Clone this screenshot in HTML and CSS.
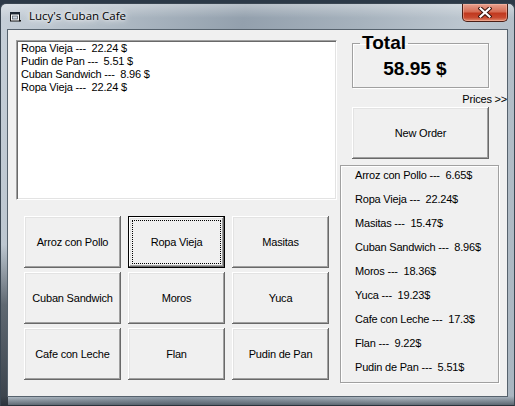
FILE: index.html
```html
<!DOCTYPE html>
<html>
<head>
<meta charset="utf-8">
<title>Lucy's Cuban Cafe</title>
<link rel="stylesheet" href="styles.css">
</head>
<body>
<div class="window">
  <div class="titlebar">
    <svg class="app-icon" width="11" height="10" viewBox="0 0 11 10">
      <rect x="0.5" y="0.5" width="9" height="8.5" fill="#fff" stroke="#111"/>
      <rect x="0" y="0" width="10" height="2.5" fill="#1d2733"/>
      <rect x="2.5" y="4" width="5" height="3" fill="#cfd8e2" stroke="#56606a" stroke-width="0.8"/>
      <rect x="9.5" y="8" width="1.5" height="1.5" fill="#111"/>
    </svg>
    <span class="title">Lucy's Cuban Cafe</span>
    <div class="close">
      <svg width="14" height="11" viewBox="0 0 14 11">
        <path d="M2.5 1.5 L11.5 9.5 M11.5 1.5 L2.5 9.5" stroke="#3b130c" stroke-width="4.2" stroke-linecap="square"/>
        <path d="M2.5 1.5 L11.5 9.5 M11.5 1.5 L2.5 9.5" stroke="#fff" stroke-width="2.2" stroke-linecap="square"/>
      </svg>
    </div>
  </div>
  <div class="client">
    <div class="left">
      <div class="listbox">
        <div class="item">Ropa Vieja ---  22.24 $</div>
        <div class="item">Pudin de Pan ---  5.51 $</div>
        <div class="item">Cuban Sandwich ---  8.96 $</div>
        <div class="item">Ropa Vieja ---  22.24 $</div>
      </div>
      <div class="menu-grid">
        <button class="btn">Arroz con Pollo</button>
        <button class="btn focused">Ropa Vieja</button>
        <button class="btn">Masitas</button>
        <button class="btn">Cuban Sandwich</button>
        <button class="btn">Moros</button>
        <button class="btn">Yuca</button>
        <button class="btn">Cafe con Leche</button>
        <button class="btn">Flan</button>
        <button class="btn">Pudin de Pan</button>
      </div>
    </div>
    <div class="right">
      <fieldset class="total">
        <legend>Total</legend>
        <div class="amount">58.95 $</div>
      </fieldset>
      <div class="prices-link">Prices &gt;&gt;</div>
      <button class="btn new-order">New Order</button>
      <div class="prices">
        <div class="price">Arroz con Pollo ---  6.65$</div>
        <div class="price">Ropa Vieja ---  22.24$</div>
        <div class="price">Masitas ---  15.47$</div>
        <div class="price">Cuban Sandwich ---  8.96$</div>
        <div class="price">Moros ---  18.36$</div>
        <div class="price">Yuca ---  19.23$</div>
        <div class="price">Cafe con Leche ---  17.3$</div>
        <div class="price">Flan ---  9.22$</div>
        <div class="price">Pudin de Pan ---  5.51$</div>
      </div>
    </div>
  </div>
</div>
</body>
</html>
```
FILE: styles.css
```css
html, body {
  margin: 0;
  height: 100%;
}
body {
  background: #2c3947;
  overflow: hidden;
  font-family: "Liberation Sans", Arial, sans-serif;
}
.window {
  margin-top: 3px;
  height: 403px;
  box-sizing: border-box;
  border: 1px solid #3a4652;
  border-bottom-color: #2a333c;
  border-radius: 6px 6px 0 0;
  padding: 0 6px 8px;
  display: flex;
  flex-direction: column;
  background:
    linear-gradient(180deg, rgba(255,255,255,0.35) 0, rgba(255,255,255,0) 14px),
    linear-gradient(to top, rgba(35,43,52,0.85) 0, rgba(35,43,52,0.6) 25%, rgba(35,43,52,0) 40%) left top / 7px 100% no-repeat,
    linear-gradient(to top, rgba(60,70,80,0.7) 0, rgba(60,70,80,0) 9px),
    linear-gradient(100deg, #c6cfd8 0%, #b1bcc6 18%, #93a0ad 42%, #a6b2bd 62%, #bcc6cf 80%, #a9b5c0 100%);
}
.titlebar {
  height: 25px;
  flex: none;
  display: flex;
  align-items: flex-start;
  padding-left: 3px;
}
.app-icon {
  margin-top: 8px;
  margin-right: 8px;
  flex: none;
}
.title {
  margin-top: 4px;
  font-family: "Open Sans", "Noto Sans", sans-serif;
  font-size: 11.5px;
  line-height: 16px;
  color: #000;
  text-shadow: 0 0 6px #fff, 0 0 10px rgba(255,255,255,0.9), 0 0 3px rgba(255,255,255,0.8);
}
.close {
  margin-left: auto;
  width: 46px;
  height: 18px;
  box-sizing: border-box;
  border: 1px solid #4a1e16;
  border-top: 0;
  border-radius: 0 0 5px 5px;
  box-shadow: inset 0 0 0 1px rgba(255,200,180,0.45);
  background: linear-gradient(180deg, #e7a08e 0%, #d66d55 45%, #c1391f 55%, #c84a30 80%, #e08c70 100%);
  display: flex;
  align-items: center;
  justify-content: center;
}
.client {
  flex: 1;
  display: flex;
  background: #f0f0f0;
  border: 1px solid #56626d;
}
.left {
  display: flex;
  flex-direction: column;
  padding: 10px 0 0 8px;
}
.listbox {
  width: 321px;
  height: 160px;
  box-sizing: border-box;
  background: #fff;
  border: 1px solid;
  border-color: #a0a0a0 #fff #fff #a0a0a0;
  box-shadow: inset 1px 1px #696969, inset -1px -1px #e3e3e3;
  padding: 1px 0 0 4px;
}
.item, .price, .btn, .prices-link {
  font-family: "Liberation Sans", Arial, sans-serif;
  font-size: 11px;
  letter-spacing: -0.2px;
  color: #000;
  white-space: pre;
}
.item {
  line-height: 13px;
}
.menu-grid {
  margin: 16px 0 0 8px;
  display: grid;
  grid-template-columns: repeat(3, 97px);
  grid-auto-rows: 52px;
  gap: 4px 7px;
}
.btn {
  background: #f0f0f0;
  border: 0;
  padding: 0;
  margin: 0;
  box-shadow: inset -1px -1px #696969, inset 1px 1px #fff, inset -2px -2px #a0a0a0, inset 2px 2px #e3e3e3;
}
.btn.focused {
  box-shadow: inset 0 0 0 1px #000, inset -2px -2px #696969, inset 2px 2px #fff, inset -3px -3px #a0a0a0, inset 3px 3px #e3e3e3;
  outline: 1px dotted #000;
  outline-offset: -5px;
}
.right {
  flex: 1;
  margin-left: 3px;
  padding-top: 3px;
  display: flex;
  flex-direction: column;
  align-items: flex-start;
}
.total {
  margin: 0 0 0 12px;
  width: 137px;
  box-sizing: border-box;
  padding: 6px 0 8px;
  border: 1px solid #a0a0a0;
  box-shadow: inset 1px 1px #fff, 1px 1px #fff;
}
.total legend {
  margin-left: 7px;
  padding: 0 2px;
  font-weight: bold;
  font-size: 19px;
  line-height: 20px;
  color: #000;
}
.amount {
  font-weight: bold;
  font-size: 19px;
  line-height: 20px;
  text-align: center;
  padding-right: 11px;
  color: #000;
}
.prices-link {
  align-self: stretch;
  text-align: right;
  margin-top: 5px;
  line-height: 13px;
}
.new-order {
  margin: 1px 0 0 12px;
  width: 137px;
  height: 52px;
}
.prices {
  margin-top: 6px;
  width: 159px;
  height: 218px;
  box-sizing: border-box;
  border: 1px solid #a0a0a0;
  box-shadow: inset 1px 1px #fff, 1px 1px #fff;
  padding: 0 0 0 14px;
  display: flex;
  flex-direction: column;
  gap: 6px;
}
.price {
  line-height: 18px;
}
```
